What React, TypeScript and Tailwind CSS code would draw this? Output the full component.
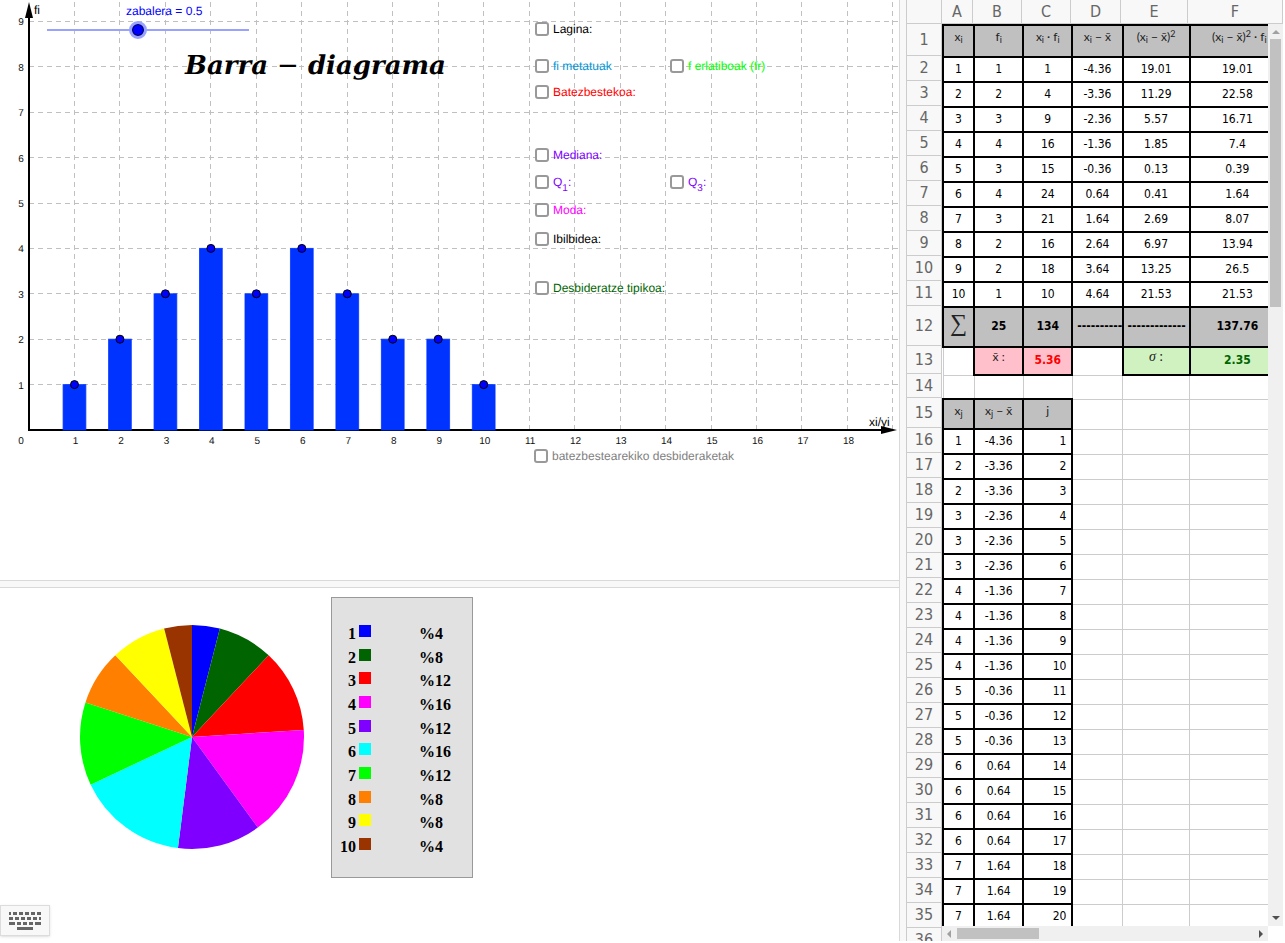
import React, { useState } from 'react';
import clsx from 'clsx';

const FREQUENCIES = [1, 2, 3, 4, 3, 4, 3, 2, 2, 1];
const SLICE_COLORS = [
  '#0000ff', '#006400', '#ff0000', '#ff00ff', '#7f00ff',
  '#00ffff', '#00ff00', '#ff7f00', '#ffff00', '#993300',
];
const TOTAL = FREQUENCIES.reduce((a, b) => a + b, 0);

// Plot coordinates
const ORIGIN_X = 29;
const ORIGIN_Y = 430;
const UNIT_X = 45.47;
const UNIT_Y = 45.4;
const toX = (n: number) => ORIGIN_X + n * UNIT_X;
const toY = (n: number) => ORIGIN_Y - n * UNIT_Y;
const range = (from: number, to: number) => Array.from({ length: to - from + 1 }, (_, i) => from + i);

interface Option {
  id: string;
  label: React.ReactNode;
  className: string;
}

const OPTIONS: Option[] = [
  { id: 'lagina', label: 'Lagina:', className: 'left-[535px] top-[21px] text-black' },
  { id: 'metatuak', label: 'fi metatuak', className: 'left-[535px] top-[58px] text-[#0096d6]' },
  { id: 'erlatiboak', label: 'f erlatiboak (fr)', className: 'left-[670px] top-[58px] text-[#00ff00]' },
  { id: 'batezbestekoa', label: 'Batezbestekoa:', className: 'left-[535px] top-[84px] text-[#ff0000]' },
  { id: 'mediana', label: 'Mediana:', className: 'left-[535px] top-[147px] text-[#7f00ff]' },
  { id: 'q1', label: <>Q<sub className="-bottom-[5px] text-[10px]">1</sub>:</>, className: 'left-[535px] top-[174px] text-[#7f00ff]' },
  { id: 'q3', label: <>Q<sub className="-bottom-[5px] text-[10px]">3</sub>:</>, className: 'left-[670px] top-[174px] text-[#7f00ff]' },
  { id: 'moda', label: 'Moda:', className: 'left-[535px] top-[202px] text-[#ff00ff]' },
  { id: 'ibilbidea', label: 'Ibilbidea:', className: 'left-[535px] top-[231px] text-black' },
  { id: 'desbideratze', label: 'Desbideratze tipikoa:', className: 'left-[535px] top-[280px] text-[#006400]' },
  { id: 'desbideraketak', label: 'batezbestearekiko desbideraketak', className: 'left-[534px] top-[448px] text-[#808080]' },
];

const PlotOption: React.FC<{ option: Option }> = ({ option }) => (
  <div className={clsx('absolute flex h-4 items-center gap-1 text-xs whitespace-nowrap', option.className)}>
    <input
      id={option.id}
      type="checkbox"
      className="h-[14px] w-[14px] shrink-0 appearance-none rounded-[3px] border-2 border-[#999999] bg-white checked:bg-[#0000ff]"
    />
    <label htmlFor={option.id}>{option.label}</label>
  </div>
);

const BarPlot: React.FC<{ barWidth: number }> = ({ barWidth }) => (
  <svg width="899" height="580" className="block max-w-none" fontFamily="Liberation Sans, sans-serif">
    <g stroke="#c0c0c0" strokeWidth="1" strokeDasharray="5 4" shapeRendering="crispEdges">
      {range(1, 19).map((n) => (
        <line key={n} x1={toX(n)} x2={toX(n)} y1={ORIGIN_Y} y2="0" />
      ))}
      {range(1, 9).map((n) => (
        <line key={n} x1={ORIGIN_X} x2="899" y1={toY(n)} y2={toY(n)} />
      ))}
    </g>

    {/* Axes */}
    <path d="M29 430V12M28 430H886" stroke="#000" strokeWidth="2" fill="none" />
    <path d="M29 2L33 18H25ZM897 430L881 434V426Z" />

    {FREQUENCIES.map((f, i) => (
      <rect
        key={i}
        x={toX(i + 1) - (barWidth * UNIT_X) / 2}
        y={toY(f)}
        width={barWidth * UNIT_X}
        height={f * UNIT_Y}
        fill="#0033ff"
        stroke="#0033ff"
        strokeOpacity="0.8"
      />
    ))}
    {FREQUENCIES.map((f, i) => (
      <circle key={i} cx={toX(i + 1)} cy={toY(f)} r="4" fill="#0000ff" stroke="#000" />
    ))}

    <g fontSize="10" fill="#111" textAnchor="middle" textRendering="geometricPrecision">
      {range(1, 18).map((n) => (
        <text key={n} x={toX(n) + 1} y="444">{n}</text>
      ))}
      {range(1, 9).map((n) => (
        <text key={n} x="21" y={toY(n) + 4}>{n}</text>
      ))}
      <text x="21" y="444">0</text>
    </g>
    <g fontSize="12" fill="#000" textRendering="geometricPrecision">
      <text x="34" y="14">fi</text>
      <text x="869" y="426">xi/yi</text>
    </g>
  </svg>
);

const PieChart: React.FC = () => {
  const point = (share: number) => {
    const angle = share * 2 * Math.PI;
    return `${113 + 112 * Math.sin(angle)} ${113 - 112 * Math.cos(angle)}`;
  };
  let sum = 0;
  return (
    <svg width="226" height="226" viewBox="0 0 226 226" className="mt-9 shrink-0">
      {FREQUENCIES.map((f, i) => {
        const start = sum / TOTAL;
        sum += f;
        return (
          <path
            key={i}
            d={`M113 113L${point(start)}A112 112 0 0 1 ${point(sum / TOTAL)}Z`}
            fill={SLICE_COLORS[i]}
          />
        );
      })}
    </svg>
  );
};

const Legend: React.FC = () => (
  <ul className="mt-[9px] flex h-[281px] w-[142px] shrink-0 flex-col justify-between border border-[#999999] bg-[#e1e1e1] pt-[27px] pr-4 pb-[27px] pl-1 font-['Liberation_Serif',serif] text-base font-bold">
    {FREQUENCIES.map((f, i) => (
      <li key={i} className="flex h-3 items-center">
        <span className="w-5 pt-[6px] text-right">{i + 1}</span>
        <span className="ml-[3px] h-3 w-3" style={{ backgroundColor: SLICE_COLORS[i] }} />
        <span className="ml-12 pt-[6px]">%{(f / TOTAL) * 100}</span>
      </li>
    ))}
  </ul>
);

const KeyboardIcon: React.FC = () => (
  <svg width="32" height="18" viewBox="0 0 32 18" fill="#666">
    <path d="M0 0h2v3H0zM4 0h4v3H4zM10 0h4v3h-4zM16 0h4v3h-4zM22 0h4v3h-4zM28 0h4v3h-4zM0 5h4v3H0zM6 5h4v3H6zM12 5h4v3h-4zM18 5h4v3h-4zM24 5h4v3h-4zM30 5h2v3h-2zM0 10h6v3H0zM8 10h4v3H8zM14 10h4v3h-4zM20 10h4v3h-4zM26 10h6v3h-6zM8 15h16v3H8z" />
  </svg>
);

/* ---------- Spreadsheet ---------- */

const Sub: React.FC<{ children: React.ReactNode }> = ({ children }) => (
  <sub className="text-[9px]">{children}</sub>
);
const Mean = () => <span>x̄</span>;

type Look = 'plain' | 'data' | 'right' | 'head' | 'sum' | 'dashes' | 'pink' | 'green' | 'mean' | 'sigma';

interface CellData {
  value?: React.ReactNode;
  look: Look;
}

const LOOKS: Record<Look, string> = {
  plain: 'border border-[#cccccc]',
  data: 'border-2 border-black pb-[2px] text-center',
  right: 'border-2 border-black pr-[5px] pb-[2px] text-right',
  head: "border-2 border-black bg-[#c0c0c0] pt-[3px] text-center align-top font-['Lato',sans-serif] whitespace-nowrap text-[#222222]",
  sum: 'border-2 border-black bg-[#c0c0c0] pb-[2px] text-center font-bold',
  dashes: 'overflow-hidden border-2 border-black bg-[#c0c0c0] pb-[2px] pl-1 text-left font-bold whitespace-nowrap',
  pink: "border-2 border-black bg-[#ffc0cb] pt-[1px] text-center align-top font-['Lato',sans-serif] text-[#222222]",
  green: "border-2 border-black bg-[#d0f2c0] pt-[1px] text-center align-top font-['Liberation_Serif',serif] text-sm leading-4 text-[#222222]",
  mean: 'border-2 border-black bg-[#ffc0cb] pb-[3px] text-center font-bold text-[#ff0000]',
  sigma: 'border-2 border-black bg-[#d0f2c0] pb-[3px] text-center font-bold text-[#006400]',
};

const cell = (look: Look, value?: React.ReactNode): CellData => ({ look, value });
const round = (n: number) => String(Number(n.toFixed(2)));
const MEAN = 5.36;

const sampleRows = FREQUENCIES.map((f, i) => {
  const x = i + 1;
  const d = x - MEAN;
  return [x, f, x * f, round(d), round(d * d), round(d * d * f)].map((v) => cell('data', v));
});

const observations = FREQUENCIES.flatMap((f, i) => Array<number>(f).fill(i + 1)).slice(0, 20);
const observationRows = observations.map((x, i) => [
  cell('data', x),
  cell('data', round(x - MEAN)),
  cell('right', i + 1),
  cell('plain'),
  cell('plain'),
  cell('plain'),
]);

const ROWS: { height: string; cells: CellData[] }[] = [
  {
    height: 'h-8',
    cells: [
      cell('head', <>x<Sub>i</Sub></>),
      cell('head', <>f<Sub>i</Sub></>),
      cell('head', <>x<Sub>i</Sub> · f<Sub>i</Sub></>),
      cell('head', <>x<Sub>i</Sub> − <Mean /></>),
      cell('head', <>(x<Sub>i</Sub> − <Mean />)<sup className="text-[9px]">2</sup></>),
      cell('head', <span className="pl-1">(x<Sub>i</Sub> − <Mean />)<sup className="text-[9px]">2</sup> · f<Sub>i</Sub></span>),
    ],
  },
  ...sampleRows.map((cells) => ({ height: 'h-[25px]', cells })),
  {
    height: 'h-10',
    cells: [
      cell('head', <span className="font-['Liberation_Serif',serif] text-2xl leading-6">∑</span>),
      cell('sum', 25),
      cell('sum', 134),
      cell('dashes', '----------'),
      cell('dashes', '-------------'),
      cell('sum', '137.76'),
    ],
  },
  {
    height: 'h-7',
    cells: [
      cell('plain'),
      cell('pink', <><Mean /> :</>),
      cell('mean', '5.36'),
      cell('plain'),
      cell('green', <><i>σ</i> :</>),
      cell('sigma', '2.35'),
    ],
  },
  { height: 'h-6', cells: range(1, 6).map(() => cell('plain')) },
  {
    height: 'h-[30px]',
    cells: [
      cell('head', <>x<Sub>j</Sub></>),
      cell('head', <>x<Sub>j</Sub> − <Mean /></>),
      cell('head', 'j'),
      cell('plain'),
      cell('plain'),
      cell('plain'),
    ],
  },
  ...observationRows.map((cells) => ({ height: 'h-[25px]', cells })),
];

const COLUMNS = [
  { name: 'A', width: 'w-[31px]' },
  { name: 'B', width: 'w-[49px]' },
  { name: 'C', width: 'w-[49px]' },
  { name: 'D', width: 'w-[50px]' },
  { name: 'E', width: 'w-[67px]' },
  { name: 'F', width: 'w-[95px]' },
];

const Spreadsheet: React.FC = () => (
  <section className="flex w-[377px] shrink-0 flex-col overflow-hidden border-l border-[#cccccc] bg-[#f8f8f8] font-['DejaVu_Sans_Condensed','DejaVu_Sans',sans-serif]">
    {/* Column names */}
    <div className="flex h-6 shrink-0 text-base text-[#666666]">
      <div className="w-[35px] border-r border-b border-[#cccccc]" />
      {COLUMNS.map((c) => (
        <div key={c.name} className={clsx('flex items-center justify-center border-r border-b border-[#cccccc]', c.width)}>
          {c.name}
        </div>
      ))}
    </div>

    <div className="flex min-h-0 flex-1">
      {/* Row numbers */}
      <div className="w-[35px] shrink-0 overflow-hidden text-base text-[#666666]">
        {[...ROWS.map((r) => r.height), 'h-[25px]'].map((height, i) => (
          <div key={i} className={clsx('flex items-center justify-center border-r border-b border-[#cccccc]', height)}>
            {i + 1}
          </div>
        ))}
      </div>

      <div className="flex min-w-0 flex-1 flex-col">
        <div className="flex min-h-0 flex-1">
          <div className="min-w-0 flex-1 overflow-hidden bg-white">
            <table className="w-[344px] table-fixed border-collapse text-xs leading-4 text-black">
              <colgroup>
                {COLUMNS.map((c) => (
                  <col key={c.name} className={c.width} />
                ))}
              </colgroup>
              <tbody>
                {ROWS.map((row, r) => (
                  <tr key={r} className={row.height}>
                    {row.cells.map((c, i) => (
                      <td key={i} className={LOOKS[c.look]}>{c.value}</td>
                    ))}
                  </tr>
                ))}
              </tbody>
            </table>
          </div>
          <div className="flex w-[15px] flex-col items-center bg-[#f0f0f0]">
            <svg width="8" height="15" viewBox="0 0 8 15"><path d="M0 10L4 6L8 10Z" fill="#a0a0a0" /></svg>
            <div className="h-[268px] w-[11px] bg-[#c1c1c1]" />
            <svg width="8" height="15" viewBox="0 0 8 15" className="mt-auto"><path d="M0 5L4 9L8 5Z" fill="#505050" /></svg>
          </div>
        </div>
        <div className="flex h-[15px] bg-white">
          <div className="flex flex-1 items-center bg-[#f0f0f0]">
            <svg width="15" height="8" viewBox="0 0 15 8"><path d="M9 0L5 4L9 8Z" fill="#a0a0a0" /></svg>
            <div className="h-[11px] w-[82px] bg-[#c1c1c1]" />
            <svg width="15" height="8" viewBox="0 0 15 8" className="ml-auto"><path d="M6 0L10 4L6 8Z" fill="#505050" /></svg>
          </div>
          <div className="w-[15px]" />
        </div>
      </div>
    </div>
  </section>
);

export default function App() {
  const [barWidth, setBarWidth] = useState(0.5);

  return (
    <div className="flex h-screen overflow-hidden bg-white pr-[2px] pb-[2px] font-['Liberation_Sans',sans-serif] text-black">
      <main className="flex min-w-0 flex-1 flex-col border-r border-[#d9d9d9]">
        <section className="relative h-[580px] shrink-0 overflow-hidden [text-rendering:geometricPrecision]">
          <BarPlot barWidth={barWidth} />
          <label htmlFor="zabalera" className="absolute top-[3px] left-[126px] text-xs text-[#0000ff]">
            zabalera = {barWidth}
          </label>
          <input
            id="zabalera"
            type="range"
            min="0.1"
            max="1"
            step="0.1"
            value={barWidth}
            onChange={(e) => setBarWidth(Number(e.target.value))}
            className="absolute top-[21px] left-[47px] h-[18px] w-[202px] appearance-none bg-transparent [&::-webkit-slider-runnable-track]:h-[2px] [&::-webkit-slider-runnable-track]:bg-[#99a3ff] [&::-webkit-slider-thumb]:-mt-2 [&::-webkit-slider-thumb]:h-[18px] [&::-webkit-slider-thumb]:w-[18px] [&::-webkit-slider-thumb]:appearance-none [&::-webkit-slider-thumb]:rounded-full [&::-webkit-slider-thumb]:border-3 [&::-webkit-slider-thumb]:border-[#99a3ff] [&::-webkit-slider-thumb]:bg-[#0000ff] [&::-webkit-slider-thumb]:shadow-[inset_0_0_0_1px_#000033]"
          />
          <h1 className="absolute top-[47px] left-[185px] flex gap-[9px] font-['DejaVu_Serif',serif] text-[26px] font-bold italic">
            <span>Barra</span>
            <span className="font-normal">−</span>
            <span>diagrama</span>
          </h1>
          {OPTIONS.map((option) => (
            <PlotOption key={option.id} option={option} />
          ))}
        </section>

        <div className="h-2 shrink-0 border-y border-[#d9d9d9] bg-[#f8f8f8]" />

        <section className="relative flex min-h-0 flex-1 items-start gap-[26px] pl-[79px]">
          <PieChart />
          <Legend />
          <button
            aria-label="Teklatua"
            className="absolute bottom-[5px] left-0 flex h-[31px] w-[50px] items-center justify-center border border-[#dcdcdc] bg-[#f8f8f8] shadow-sm"
          >
            <KeyboardIcon />
          </button>
        </section>
      </main>

      <div className="w-[6px] shrink-0 bg-[#f8f8f8]" />
      <Spreadsheet />
    </div>
  );
}
